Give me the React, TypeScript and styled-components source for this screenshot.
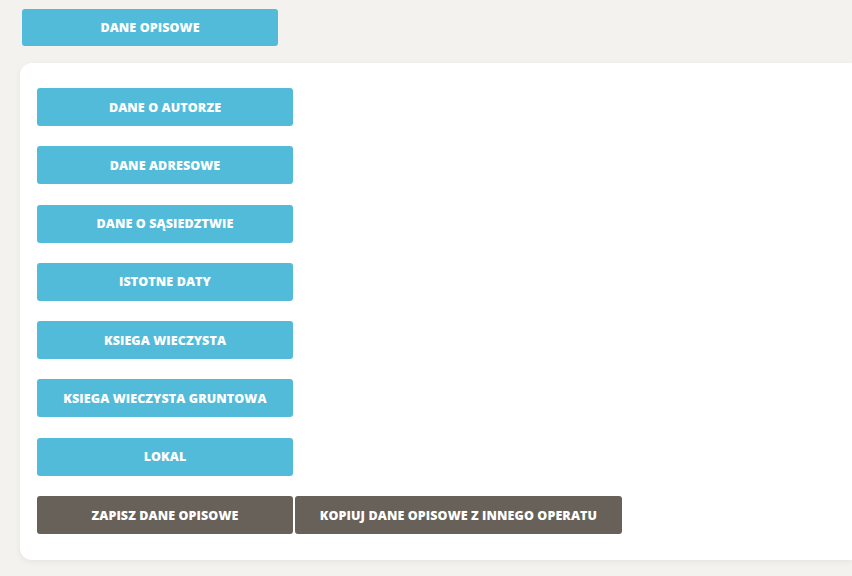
import React from 'react';
import styled, { createGlobalStyle } from 'styled-components';

const GlobalStyle = createGlobalStyle`
  body {
    margin: 0;
    background: #f3f2ee;
    font-family: 'Open Sans', 'Liberation Sans', sans-serif;
  }
`;

const Page = styled.div`
  padding: 9px 0 16px 20px;
  display: flex;
  flex-direction: column;
  align-items: flex-start;
  gap: 17px;
`;

const Button = styled.button<{ $dark?: boolean; $width?: number }>`
  height: 38px;
  width: ${(p) => p.$width ?? 256}px;
  border: none;
  border-radius: 3px;
  background: ${(p) => (p.$dark ? '#686159' : '#52bbda')};
  color: #ffffff;
  font-family: 'Open Sans', 'Liberation Sans', sans-serif;
  font-weight: 800;
  font-size: 12.5px;
  letter-spacing: 0.1px;
  text-transform: uppercase;
  cursor: pointer;
`;

const TopButton = styled(Button)`
  margin-left: 2px;
  height: 37px;
`;

const Card = styled.div`
  align-self: stretch;
  background: #ffffff;
  border-radius: 12px 0 0 12px;
  box-shadow: 0 2px 6px rgba(0, 0, 0, 0.06);
  padding: 25px 0 26px 17px;
  display: flex;
  flex-direction: column;
  gap: 20.3px;
`;

const Actions = styled.div`
  display: flex;
  gap: 2px;
`;

const sections = [
  'Dane o autorze',
  'Dane adresowe',
  'Dane o sąsiedztwie',
  'Istotne daty',
  'Ksiega wieczysta',
  'Ksiega wieczysta gruntowa',
  'Lokal',
];

const App: React.FC = () => {
  return (
    <>
      <GlobalStyle />
      <Page>
        <TopButton>Dane opisowe</TopButton>
        <Card>
          {sections.map((s) => (
            <Button key={s}>{s}</Button>
          ))}
          <Actions>
            <Button $dark>Zapisz dane opisowe</Button>
            <Button $dark $width={327}>
              Kopiuj dane opisowe z innego operatu
            </Button>
          </Actions>
        </Card>
      </Page>
    </>
  );
};

export default App;
